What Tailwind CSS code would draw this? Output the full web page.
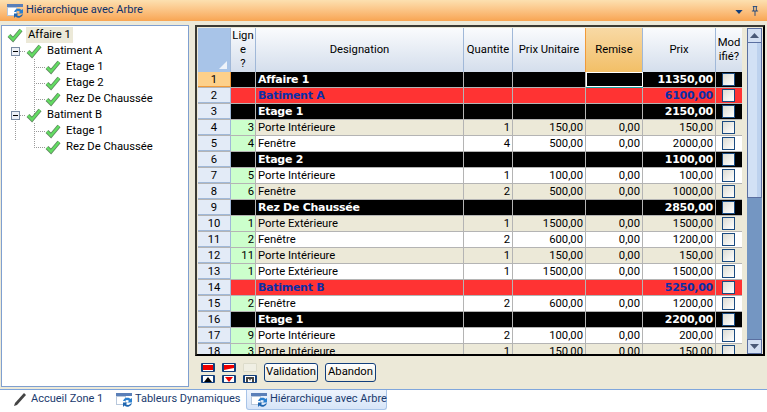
<!DOCTYPE html>
<html lang="fr">
<head>
    <meta charset="UTF-8">
    <title>Hiérarchique avec Arbre</title>
    <script src="https://cdn.jsdelivr.net/npm/@tailwindcss/browser@4"></script>
</head>
<body class="bg-white">
    <svg class="hidden">
        <defs>
            <symbol id="check" viewBox="0 0 16 16">
                <path d="M2 8.500 L6 12.500 L14 3" fill="none" stroke="#5f8a5f" stroke-width="4"/>
                <path d="M2 8.500 L6 12.500 L14 3" fill="none" stroke="#62dc62" stroke-width="2.400"/>
            </symbol>
            <symbol id="win" viewBox="0 0 16 14">
                <rect x="0" y="0" width="16" height="3" fill="#5a7fb8"/>
                <rect x="0.500" y="3.500" width="9" height="8" fill="#fff" stroke="#b8c8dc"/>
                <path d="M7 8a4.500 4.500 0 0 1 7.500-2l1.500-1v4.500h-4.500l1.500-1.500a2.500 2.500 0 0 0-4 0z" fill="#2a80d0"/>
                <path d="M16 10a4.500 4.500 0 0 1-7.500 2.500L7 14V9.500h4.500L10 11a2.500 2.500 0 0 0 4 0z" fill="#1f66b0"/>
            </symbol>
        </defs>
    </svg>
    <div class="w-[767px] h-[412px] flex flex-col overflow-hidden font-['Roboto',sans-serif] text-[11.25px] text-black">
        <!-- Title bar -->
        <div class="h-[21px] shrink-0 flex items-center pl-[7px] pr-[8px] bg-gradient-to-b from-[#fce0b0] to-[#f8a552]">
            <svg class="w-[16px] h-[14px] mr-[3px] shrink-0"><use href="#win"/></svg>
            <span class="text-[#0b2f6b] text-[11px]">Hiérarchique avec Arbre</span>
            <svg class="ml-auto w-[8px] h-[4px] mt-[2px]" viewBox="0 0 9 5"><path d="M0 0h9L4.500 5z" fill="#123f7c"/></svg>
            <svg class="ml-[8px] w-[8px] h-[10px]" viewBox="0 0 9 11"><path d="M2 .5h5M3 .5v5M6 .5v5M1 5.500h7M4.500 5.500V11" stroke="#123f7c" fill="none"/></svg>
        </div>

        <!-- Main area -->
        <div class="h-[368px] shrink-0 flex bg-[#ece9d8] pt-[4px] pl-[1px] pr-[2px]">
            <!-- Tree -->
            <div class="relative w-[188px] h-[362px] shrink-0 bg-white border border-[#7f9fd0] pt-[1px]">
                <svg class="absolute left-0 top-0" width="100" height="140" stroke="#9a9a9a" stroke-dasharray="1 1" fill="none">
                    <path d="M13.500 25V115M18 25.500H24M18 89.500H24M32.500 33V89M32 41.500H43M32 57.500H43M32 73.500H43M32.500 97V121M32 105.500H43M32 121.500H43"/>
                </svg>
                <div class="flex items-center h-[16px] pl-[5px]">
                    <svg class="w-[16px] h-[16px] mr-[3px]"><use href="#check"/></svg>
                    <span class="bg-[#ece9d8] px-[2px] h-[16px] leading-[16px]">Affaire 1</span>
                </div>
                <div class="relative flex items-center h-[16px] pl-[24px]">
                    <span class="absolute left-[9px] top-[4px] w-[9px] h-[9px] bg-[#eef1f7] border border-[#7a8ba3] flex items-center justify-center"><span class="w-[5px] h-[1px] bg-black"></span></span>
                    <svg class="w-[16px] h-[16px] mr-[5px]"><use href="#check"/></svg>Batiment A
                </div>
                <div class="flex items-center h-[16px] pl-[43px]"><svg class="w-[16px] h-[16px] mr-[5px]"><use href="#check"/></svg>Etage 1</div>
                <div class="flex items-center h-[16px] pl-[43px]"><svg class="w-[16px] h-[16px] mr-[5px]"><use href="#check"/></svg>Etage 2</div>
                <div class="flex items-center h-[16px] pl-[43px]"><svg class="w-[16px] h-[16px] mr-[5px]"><use href="#check"/></svg>Rez De Chaussée</div>
                <div class="relative flex items-center h-[16px] pl-[24px]">
                    <span class="absolute left-[9px] top-[4px] w-[9px] h-[9px] bg-[#eef1f7] border border-[#7a8ba3] flex items-center justify-center"><span class="w-[5px] h-[1px] bg-black"></span></span>
                    <svg class="w-[16px] h-[16px] mr-[5px]"><use href="#check"/></svg>Batiment B
                </div>
                <div class="flex items-center h-[16px] pl-[43px]"><svg class="w-[16px] h-[16px] mr-[5px]"><use href="#check"/></svg>Etage 1</div>
                <div class="flex items-center h-[16px] pl-[43px]"><svg class="w-[16px] h-[16px] mr-[5px]"><use href="#check"/></svg>Rez De Chaussée</div>
            </div>

            <!-- Right side -->
            <div class="ml-[6px] flex-1 min-w-0 flex flex-col">
                <div class="h-[331px] shrink-0 border-2 border-t-[#3a3a34] border-l-[#3a3a34] border-r-black border-b-black flex pt-[1px] pl-[1px] pr-[1px]">
                    <div class="w-[544px] shrink-0 overflow-hidden">
                        <!-- Header -->
                        <div class="flex h-[44px]">
                            <div class="relative w-[33px] bg-[#a8c4e8] border-r border-[#a0b8d8]">
                                <svg class="absolute right-[3px] bottom-[3px]" width="8" height="8"><path d="M8 0V8H0z" fill="#eef3fa"/></svg>
                            </div>
                            <div class="w-[25px] flex items-center justify-center text-center leading-[14px] bg-gradient-to-b from-[#fafbfd] to-[#d4deec] border-r border-[#a0b8d8]">Lign<br>e<br>?</div>
                            <div class="w-[208px] flex items-center justify-center bg-gradient-to-b from-[#fafbfd] to-[#d4deec] border-r border-[#a0b8d8]">Designation</div>
                            <div class="w-[49px] flex items-center justify-center bg-gradient-to-b from-[#fafbfd] to-[#d4deec] border-r border-[#a0b8d8]">Quantite</div>
                            <div class="w-[73px] flex items-center justify-center bg-gradient-to-b from-[#fafbfd] to-[#d4deec] border-r border-[#f09a3a]">Prix Unitaire</div>
                            <div class="w-[57px] flex items-center justify-center bg-gradient-to-b from-[#f8d9a4] to-[#f2bf66] border-r border-[#a0b8d8]">Remise</div>
                            <div class="w-[73px] flex items-center justify-center bg-gradient-to-b from-[#fafbfd] to-[#d4deec] border-r border-[#a0b8d8]">Prix</div>
                            <div class="w-[26px] flex items-center justify-center text-center leading-[14px] bg-gradient-to-b from-[#fafbfd] to-[#d4deec]">Mod<br>ifié?</div>
                        </div>
                        <div id="rows"></div>
                    </div>
                    <!-- Scrollbar -->
                    <div class="ml-[5px] w-[16px] flex flex-col">
                        <div class="h-[15px] shrink-0 bg-[#d3e0f3] border border-[#5a6fa0] flex items-center justify-center"><svg width="9" height="5"><path d="M0 5h9L4.500 0z" fill="#4a5a78"/></svg></div>
                        <div class="h-[155px] shrink-0 flex border-x border-b border-[#5a6fa0]">
                            <div class="w-[9px] bg-[#d2e1f5]"></div>
                            <div class="flex-1 bg-[#bdd2ee]"></div>
                        </div>
                        <div class="flex-1 bg-[#7496c2]"></div>
                        <div class="h-[15px] shrink-0 bg-[#d3e0f3] border border-[#5a6fa0] flex items-center justify-center"><svg width="9" height="5"><path d="M0 0h9L4.500 5z" fill="#4a5a78"/></svg></div>
                    </div>
                </div>
                <!-- Footer buttons -->
                <div class="h-[33px] flex items-start pt-[7px] pl-[6px]">
                    <div class="grid grid-cols-3 gap-x-[7px] gap-y-[3px] w-[56px]">
                        <div class="h-[9px] border-x-2 border-y border-[#123f7c] bg-white flex items-center justify-center rounded-[1px]"><span class="w-[10px] h-[5px] bg-[#ee0000]"></span></div>
                        <div class="h-[9px] border-x-2 border-y border-[#123f7c] bg-white flex items-center justify-center rounded-[1px]"><svg width="10" height="5"><path d="M0 0h10v3L0 5z" fill="#ee0000"/></svg></div>
                        <div class="h-[9px] border border-[#dddccb] bg-[#f0efe4] rounded-[1px]"></div>
                        <div class="h-[8px] border-x-2 border-y border-[#123f7c] bg-white flex items-center justify-center rounded-[1px]"><svg width="8" height="5"><path d="M0 5h8L4 0z" fill="#000"/></svg></div>
                        <div class="h-[8px] border-x-2 border-y border-[#123f7c] bg-white flex items-center justify-center rounded-[1px]"><svg width="8" height="5"><path d="M0 0h8L4 5z" fill="#ee0000"/></svg></div>
                        <div class="h-[8px] border-x-2 border-y border-[#123f7c] bg-white flex items-center justify-center rounded-[1px]"><svg width="8" height="5"><path d="M0 0h8v5H6V2H5L4 4 3 2H2v3H0z" fill="#444"/></svg></div>
                    </div>
                    <button class="ml-[7px] w-[54px] h-[19px] rounded-[3px] border border-[#123f7c] bg-gradient-to-b from-white to-[#ece9d8]">Validation</button>
                    <button class="ml-[7px] w-[51px] h-[19px] rounded-[3px] border border-[#123f7c] bg-gradient-to-b from-white to-[#ece9d8]">Abandon</button>
                </div>
            </div>
        </div>

        <!-- Tabs -->
        <div class="flex-1 bg-white border-t border-[#7fa6dc] flex items-start text-[#1a3a6e] text-[11px] whitespace-nowrap">
            <div class="h-[19px] flex items-center w-[114px] pl-[13px]">
                <svg class="w-[15px] h-[15px] mr-[3px] shrink-0" viewBox="0 0 15 15"><path d="M1 14L2 11 11 1 13 3 4 13z" fill="#444"/></svg>
                <span>Accueil Zone 1</span>
            </div>
            <div class="h-[19px] flex items-center w-[132px] pl-[2px]">
                <svg class="w-[16px] h-[14px] mr-[3px] shrink-0"><use href="#win"/></svg>
                <span>Tableurs Dynamiques</span>
            </div>
            <div class="h-[20px] flex items-center pl-[4px] w-[141px] bg-gradient-to-b from-[#eef4fd] to-[#d7e5f8] border border-t-0 border-[#a8c4e8] rounded-b-[3px]">
                <svg class="w-[16px] h-[14px] mr-[3px] shrink-0"><use href="#win"/></svg>
                <span>Hiérarchique avec Arbre</span>
            </div>
        </div>
    </div>

    <script>
        // type: a = black, b = red, n = plain line
        const rows = [
            ["a", "", "Affaire 1", "", "", "", "11350,00"],
            ["b", "", "Batiment A", "", "", "", "6100,00"],
            ["a", "", "Etage 1", "", "", "", "2150,00"],
            ["n", "3", "Porte Intérieure", "1", "150,00", "0,00", "150,00"],
            ["n", "4", "Fenêtre", "4", "500,00", "0,00", "2000,00"],
            ["a", "", "Etage 2", "", "", "", "1100,00"],
            ["n", "5", "Porte Intérieure", "1", "100,00", "0,00", "100,00"],
            ["n", "6", "Fenêtre", "2", "500,00", "0,00", "1000,00"],
            ["a", "", "Rez De Chaussée", "", "", "", "2850,00"],
            ["n", "1", "Porte Extérieure", "1", "1500,00", "0,00", "1500,00"],
            ["n", "2", "Fenêtre", "2", "600,00", "0,00", "1200,00"],
            ["n", "11", "Porte Intérieure", "1", "150,00", "0,00", "150,00"],
            ["n", "1", "Porte Extérieure", "1", "1500,00", "0,00", "1500,00"],
            ["b", "", "Batiment B", "", "", "", "5250,00"],
            ["n", "2", "Fenêtre", "2", "600,00", "0,00", "1200,00"],
            ["a", "", "Etage 1", "", "", "", "2200,00"],
            ["n", "9", "Porte Intérieure", "2", "100,00", "0,00", "200,00"],
            ["n", "3", "Porte Intérieure", "1", "150,00", "0,00", "150,00"],
        ];
        const beige = [4, 8, 10, 12, 18];
        let html = "";
        rows.forEach((r, i) => {
            const n = i + 1;
            let tone = "bg-white";
            if (r[0] === "a") tone = "bg-black text-white font-bold text-[11px] font-['DejaVu_Sans',sans-serif] tracking-tight";
            else if (r[0] === "b") tone = "bg-[#ff3333] text-[#0a2fa8] font-bold text-[11px] font-['DejaVu_Sans',sans-serif] tracking-tight";
            else if (beige.includes(n)) tone = "bg-[#ece9d8]";
            const head = n === 1 ? "bg-[#fdd08a] border-[#f09a3a]" : "bg-[#e3ebf7] border-[#a0b8d8]";
            const line = r[0] === "n" ? "bg-[#ccffcc]" : "";
            const cell = "h-full border-r border-[#b4b4b4] overflow-hidden whitespace-nowrap";
            const remise = n === 1 ? "relative z-10 border border-white shadow-[0_1px_0_#1aa5a5]" : "";
            html += `<div class="flex h-[16px] leading-[16px] border-b border-[#b4b4b4] ${tone}">
                <div class="w-[33px] h-full border-r border-b ${head} text-center text-black font-normal text-[11.25px] font-['Roboto',sans-serif] tracking-normal">${n}</div>
                <div class="w-[25px] pr-[1px] text-right text-black font-normal text-[11.25px] font-['Roboto',sans-serif] tracking-normal ${cell} ${line}">${r[1]}</div>
                <div class="w-[208px] pl-[2px] ${cell}">${r[2]}</div>
                <div class="w-[49px] pr-[2px] text-right ${cell}">${r[3]}</div>
                <div class="w-[73px] pr-[2px] text-right ${cell}">${r[4]}</div>
                <div class="w-[57px] pr-[2px] text-right ${cell} ${remise}">${r[5]}</div>
                <div class="w-[73px] pr-[2px] text-right ${cell}">${r[6]}</div>
                <div class="w-[25px] h-full flex items-center justify-center pr-[1px]"><span class="w-[13px] h-[13px] border border-[#1a4a80] bg-gradient-to-br from-[#dcdcd4] to-white"></span></div>
            </div>`;
        });
        document.getElementById("rows").innerHTML = html;
    </script>
</body>
</html>
